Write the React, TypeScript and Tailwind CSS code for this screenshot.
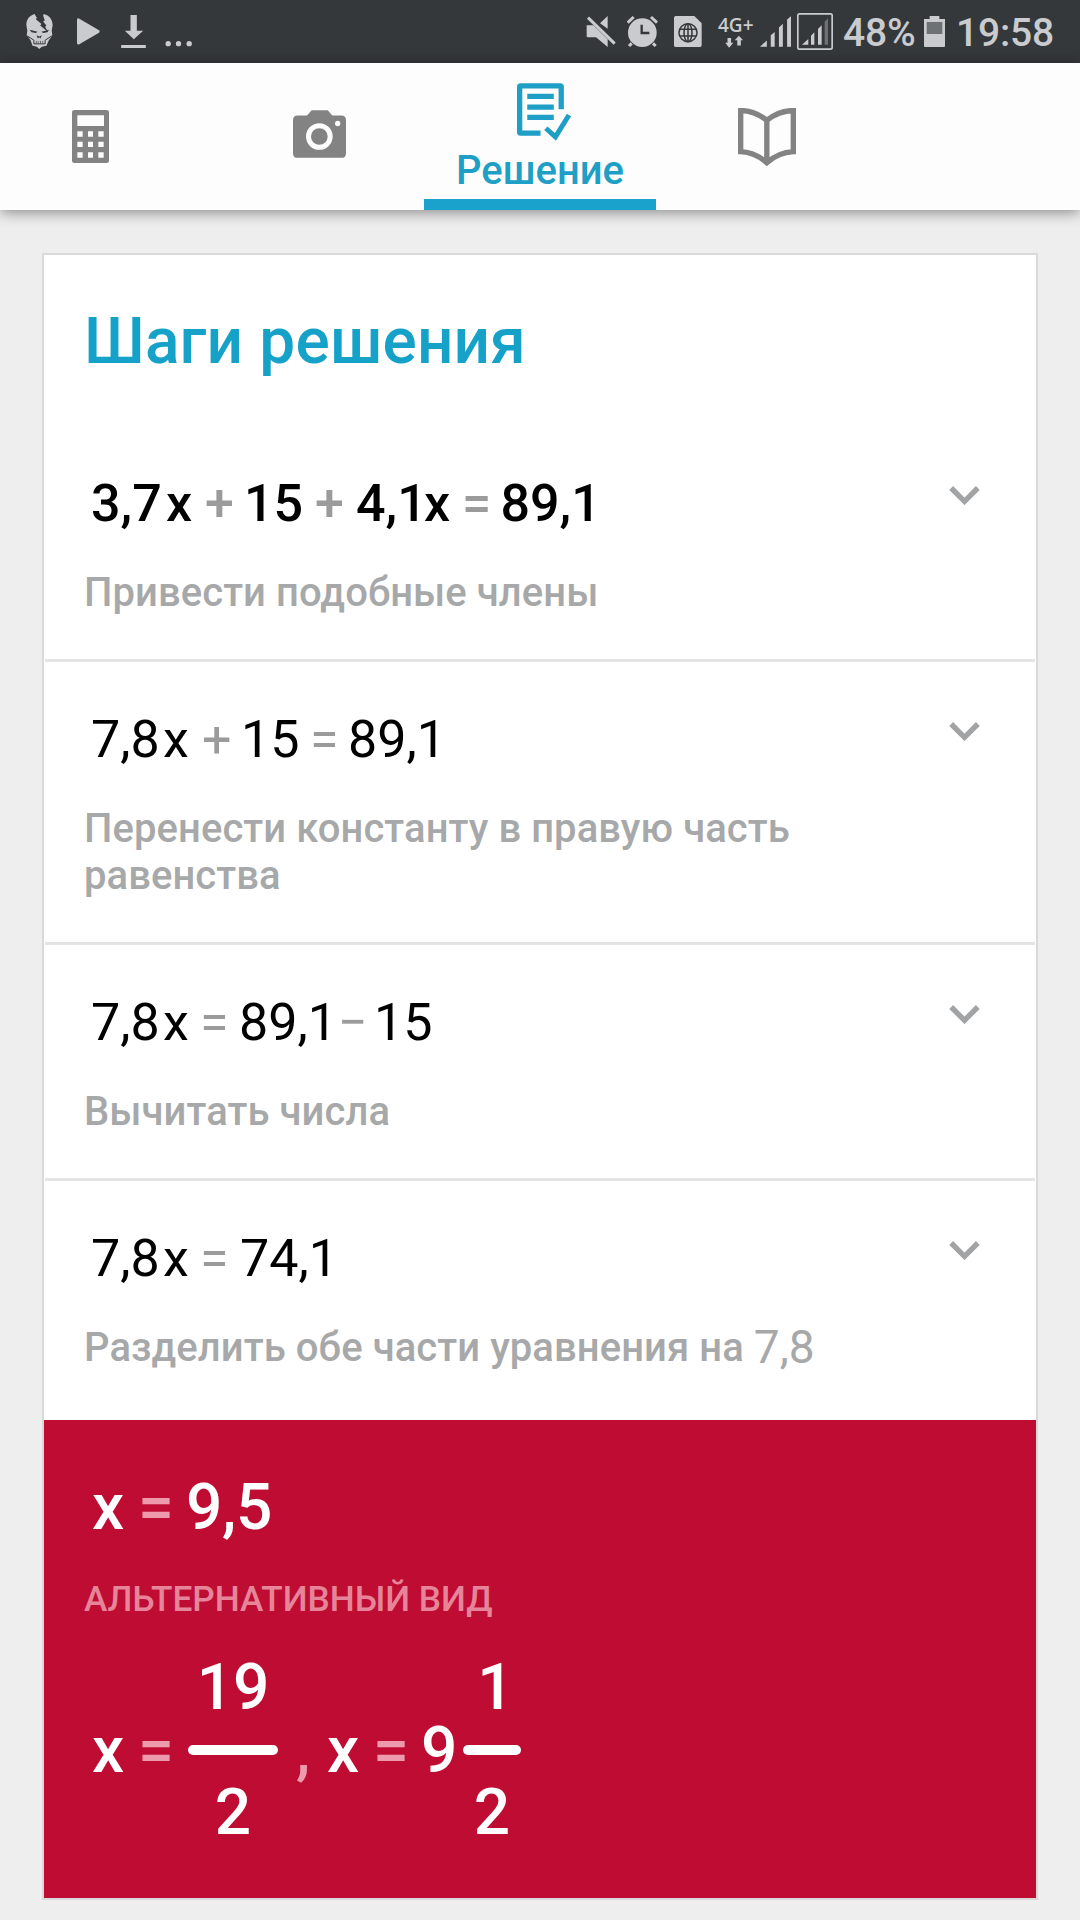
import type { ReactNode } from 'react';

interface Token {
  text: string;
  className: string;
}

interface Step {
  tokens: Token[];
  className: string;
  hint: ReactNode;
}

const op = 'text-[#9b9b9b]';

const steps: Step[] = [
  {
    className: 'font-medium',
    tokens: [
      { text: '3,7', className: 'w-[75px]' },
      { text: 'x', className: 'w-[39px]' },
      { text: '+', className: `w-[39px] ${op}` },
      { text: '15', className: 'w-[71px]' },
      { text: '+', className: `w-[41px] ${op}` },
      { text: '4,1', className: 'w-[68px]' },
      { text: 'x', className: 'w-[38px]' },
      { text: '=', className: `w-[38.500px] ${op}` },
      { text: '89,1', className: '' },
    ],
    hint: 'Привести подобные члены',
  },
  {
    className: 'font-normal',
    tokens: [
      { text: '7,8', className: 'w-[72px]' },
      { text: 'x', className: 'w-[39px]' },
      { text: '+', className: `w-[39px] ${op}` },
      { text: '15', className: 'w-[69px]' },
      { text: '=', className: `w-[38px] ${op}` },
      { text: '89,1', className: '' },
    ],
    hint: 'Перенести константу в правую часть равенства',
  },
  {
    className: 'font-normal',
    tokens: [
      { text: '7,8', className: 'w-[72px]' },
      { text: 'x', className: 'w-[37px]' },
      { text: '=', className: `w-[39px] ${op}` },
      { text: '89,1', className: 'w-[99px]' },
      { text: '−', className: `w-[36px] ${op}` },
      { text: '15', className: '' },
    ],
    hint: 'Вычитать числа',
  },
  {
    className: 'font-normal',
    tokens: [
      { text: '7,8', className: 'w-[72px]' },
      { text: 'x', className: 'w-[37px]' },
      { text: '=', className: `w-[40px] ${op}` },
      { text: '74,1', className: '' },
    ],
    hint: (
      <>
        Разделить обе части уравнения на{' '}
        <span className="relative top-[2px] text-[46px] leading-[40px] font-normal">7,8</span>
      </>
    ),
  },
];

function StatusBar() {
  return (
    <div className="flex h-[63px] bg-[#35383b] pl-[26px] pr-[26px] text-[#c9cbce]">
      {/* Notifications */}
      <svg viewBox="78 0 82 189" className="h-[63px] w-[27px]" fill="currentColor">
        <path d="M104 41 C88 46 79 58 79 75 L82 92 L80 106 L86 113 L92 122 L98 138 L111 141 L118 148 L126 141 L140 138 L147 122 L154 112 L158 104 L156 92 L159 75 C158 57 150 46 132 41 L130 46 L135 61 L130 63 L140 77 L136 80 L145 96 L121 76 L125 72 L108 57 L111 53 Z" />
        <path d="M89 89 L113 95 L108 99 L95 97 Z M148 89 L125 95 L130 99 L143 97 Z M110 106 L118 110 L126 106 L122 116 L118 112 L114 116 Z" fill="#35383b" />
        <path d="M82 108 L102 121 V132 H136 V121 L156 108" fill="none" stroke="#35383b" strokeWidth="3" />
        <path d="M109 123 V132 M115 123 V132 M122 123 V132 M129 123 V132" stroke="#35383b" strokeWidth="2" />
      </svg>
      <svg viewBox="231 0 70 189" className="ml-[24px] h-[63px] w-[23px]" fill="currentColor">
        <path d="M231 59 Q231 52 237 55 L298 91 Q302 94 298 98 L238 133 Q231 136 231 129 Z" />
      </svg>
      <svg viewBox="364 0 74 189" className="ml-[21px] h-[63px] w-[25px]" fill="currentColor">
        <path d="M392 45 H411 V92 H430 L402 118 L375 92 H392 Z M364 135 H438 V144 H364 Z" />
      </svg>
      <svg viewBox="496 0 80 189" className="ml-[19px] h-[63px] w-[27px]" fill="currentColor">
        <circle cx="505" cy="131" r="8" />
        <circle cx="536" cy="131" r="8" />
        <circle cx="568" cy="131" r="8" />
      </svg>

      <div className="ml-auto flex">
        <svg viewBox="76 0 90 189" className="h-[63px] w-[30px]" fill="currentColor">
          <path d="M78 76 H98 L141 118 V141 L106 112 H82 Q78 112 78 108 Z M141 48 V86 L118 70 Z" />
          <path d="M88 46 L170 125" stroke="#35383b" strokeWidth="6" />
          <path d="M82 53 L162 131" stroke="currentColor" strokeWidth="9" />
        </svg>
        <svg viewBox="200 0 93 189" className="ml-[11px] h-[63px] w-[31px]" fill="currentColor">
          <circle cx="246" cy="98" r="43" />
          <path d="M202 68 L220 51 M290 68 L272 51 M214 130 L206 138 M278 130 L286 138" stroke="currentColor" strokeWidth="9" />
          <path d="M244 74 V99 H267" fill="none" stroke="#35383b" strokeWidth="7" />
        </svg>
        <svg viewBox="342 0 84 189" className="ml-[16px] h-[63px] w-[28px]" fill="currentColor">
          <path d="M347 48 H403 L425 70 V135 Q425 141 420 141 H347 Q342 141 342 136 V53 Q342 48 347 48 Z" />
          <g fill="none" stroke="#35383b" strokeWidth="4.500">
            <circle cx="384" cy="98" r="27" />
            <ellipse cx="384" cy="98" rx="12" ry="27" />
            <path d="M384 71 V125 M360 88 H408 M360 108 H408" />
          </g>
        </svg>
        <div className="ml-[16px] flex w-[34px] flex-col pt-[15px]">
          <span className="h-[20px] text-[19px] leading-[20px] font-semibold whitespace-nowrap [font-family:'Open_Sans',sans-serif]">4G+</span>
          <svg viewBox="496 105 57 40" className="ml-[7px] h-[13px] w-[19px]" fill="currentColor">
            <path d="M503 114 H514 V129 H521 L508 144 L496 129 H503 Z M533 137 H544 V121 H551 L538 107 L525 121 H533 Z" />
          </svg>
        </div>
        <svg viewBox="599 0 95 189" className="ml-[8px] h-[63px] w-[31px]" fill="currentColor">
          <path d="M599 141 L620 122 V141 Z M632 141 V106 L644 96 V141 Z M657 141 V82 L669 71 V141 Z M682 141 V58 L694 48 V141 Z" />
        </svg>
        <svg viewBox="711 0 108 189" className="ml-[6px] h-[63px] w-[36px]" fill="currentColor">
          <rect x="713.500" y="41.500" width="103" height="106" rx="5" fill="none" stroke="currentColor" strokeWidth="5" />
          <path d="M726 134 L745 117 V134 Z M753 134 V107 L763 97 V134 Z M774 134 V87 L785 76 V134 Z" />
          <path d="M794 134 V65 L804 55 V134 Z" fill="#6f7275" />
        </svg>
        <span className="ml-[10px] w-[81px] text-[39px] leading-[67px] font-medium tracking-[-0.2px]">48%</span>
        <svg viewBox="1092 0 63 189" className="h-[63px] w-[21px]" fill="currentColor">
          <path d="M1109 48 H1138 V57 H1155 V138 Q1155 141 1152 141 H1095 Q1092 141 1092 138 V57 H1109 Z" />
          <path d="M1100 66 H1147 V102 H1100 Z" fill="#6f7275" />
        </svg>
        <span className="ml-[11px] w-[98px] text-[39px] leading-[67px] font-medium tracking-[-0.2px]">19:58</span>
      </div>
    </div>
  );
}

function TabBar() {
  return (
    <div className="relative flex h-[147px] bg-[#fdfdfd] text-[#838383] shadow-[0_2px_14px_rgba(0,0,0,0.45)]">
      <div className="flex w-[181px] items-center justify-center">
        <svg viewBox="0 0 111 159" className="h-[53px] w-[37px]">
          <rect width="111" height="159" rx="7" fill="currentColor" />
          <path
            d="M16 16 H96 V48 H16 Z M16 64 H32 V80 H16 Z M48 64 H63 V80 H48 Z M79 64 H95 V80 H79 Z M16 95 H32 V111 H16 Z M48 95 H63 V111 H48 Z M79 95 H95 V111 H79 Z M16 127 H32 V143 H16 Z M48 127 H63 V143 H48 Z M79 127 H95 V143 H79 Z"
            fill="#fdfdfd"
          />
        </svg>
      </div>
      <div className="ml-[34px] flex w-[209px] items-center justify-center pb-[5px]">
        <svg viewBox="879 330 159 143" className="h-[48px] w-[53px]">
          <path d="M935 330 H983 L997 346 H1024 Q1038 346 1038 360 V459 Q1038 473 1024 473 H893 Q879 473 879 459 V360 Q879 346 893 346 H921 Z" fill="currentColor" />
          <circle cx="958" cy="409" r="32.500" fill="none" stroke="#fdfdfd" strokeWidth="15" />
          <circle cx="1013" cy="370" r="8" fill="#fdfdfd" />
        </svg>
      </div>
      <div className="flex w-[232px] flex-col items-center pt-[20px] text-[#209fc6]">
        <svg viewBox="348 69 163 174" className="ml-[7px] h-[58px] w-[54px]">
          <path d="M481.500 148 V80 Q481.500 77 478.500 77 H359 Q356 77 356 80 V216 Q356 219.500 359 219.500 H419" fill="none" stroke="currentColor" strokeWidth="16" />
          <path d="M379 109 H459 M379 141 H459 M379 172 H459" stroke="currentColor" strokeWidth="16" />
          <path d="M435 205 L464 231 L505 165" fill="none" stroke="currentColor" strokeWidth="15" />
        </svg>
        <span className="mt-[6px] text-[40px] leading-[47px] font-medium">Решение</span>
        <div className="mt-auto h-[11px] w-full bg-[#1aa1cc]" />
      </div>
      <div className="flex w-[222px] items-center justify-center">
        <svg viewBox="1014 142 173 173" className="h-[58px] w-[58px]">
          <path d="M1100 179 Q1065 150 1022 149.500 V272 Q1065 274 1100 305 Q1135 274 1179 272 V149.500 Q1135 150 1100 179 V305" fill="none" stroke="currentColor" strokeWidth="16" />
        </svg>
      </div>
    </div>
  );
}

function Tokens({ tokens }: { tokens: Token[] }) {
  return (
    <>
      {tokens.map((token, i) => (
        <span key={i} className={`shrink-0 ${token.className}`}>
          {token.text}
        </span>
      ))}
    </>
  );
}

function StepRow({ step, last }: { step: Step; last: boolean }) {
  return (
    <>
      <div className={`flex justify-between pr-[56px] pl-[40px] pt-[48px] ${last ? 'pb-[49px]' : 'pb-[43px]'}`}>
        <div className="w-[760px]">
          <div className={`flex h-[60px] pl-[7px] text-[52px] leading-[60px] text-black ${step.className}`}>
            <Tokens tokens={step.tokens} />
          </div>
          <p className="mt-[35px] text-[40px] leading-[47px] font-medium tracking-[0.07px] text-[#a7a8a9]">{step.hint}</p>
        </div>
        <svg viewBox="0 0 92 57" className="mt-[12px] h-[19px] w-[31px]">
          <path d="M6 6 L46 46 L86 6" fill="none" stroke="#a2a3a5" strokeWidth="16" />
        </svg>
      </div>
      {!last && <div className="mx-px h-[3px] bg-[#e4e4e4]" />}
    </>
  );
}

function Fraction({ top, bottom, className }: { top: string; bottom: string; className: string }) {
  return (
    <div className={`flex flex-col items-center ${className}`}>
      <span>{top}</span>
      <div className="my-[20px] h-[10px] w-full rounded-full bg-white" />
      <span>{bottom}</span>
    </div>
  );
}

function Result() {
  return (
    <div className="h-[478px] bg-[#be0c32] pt-[50px] pl-[40px] text-white">
      <div className="flex pl-[8px] text-[64px] leading-[75px] font-medium">
        <span className="w-[46px]">x</span>
        <span className="w-[48px] text-[#ec9aac]">=</span>
        <span className="tracking-[-0.3px]">9,5</span>
      </div>
      <p className="mt-[33px] text-[35.2px] leading-[42px] font-medium text-[#e6859a]">АЛЬТЕРНАТИВНЫЙ ВИД</p>
      <div className="mt-[30px] flex items-center pl-[8px] text-[64px] leading-[75px] font-medium">
        <span className="w-[46px]">x</span>
        <span className="w-[50px] text-[#ec9aac]">=</span>
        <Fraction top="19" bottom="2" className="w-[90px]" />
        <span className="ml-[18px] w-[31px] text-[#ec9aac]">,</span>
        <span className="w-[46px]">x</span>
        <span className="w-[48px] text-[#ec9aac]">=</span>
        <span className="w-[42px]">9</span>
        <Fraction top="1" bottom="2" className="w-[58px] [&>span:first-child]:pl-[7px]" />
      </div>
    </div>
  );
}

export default function App() {
  return (
    <div className="h-[1920px] w-[1080px] overflow-hidden bg-[#eeeeee] [font-family:Roboto,sans-serif]">
      <StatusBar />
      <TabBar />
      <main className="mx-[42px] mt-[43px] border-2 border-[#d9d9d9] bg-white">
        <h1 className="pt-[49px] pl-[40px] text-[64px] leading-[75px] font-medium tracking-[0.15px] text-[#16a1c9]">Шаги решения</h1>
        <div className="mt-[47px]">
          {steps.map((step, i) => (
            <StepRow key={i} step={step} last={i === steps.length - 1} />
          ))}
        </div>
        <Result />
      </main>
    </div>
  );
}
